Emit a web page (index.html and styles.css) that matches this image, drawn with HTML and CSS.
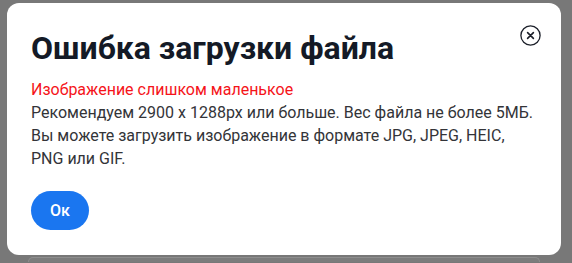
FILE: index.html
```html
<!DOCTYPE html>
<html lang="ru">
<head>
<meta charset="utf-8">
<link rel="stylesheet" href="styles.css">
</head>
<body>
<div class="overlay">
  <div class="modal">
    <div class="modal-head">
      <h1 class="title">Ошибка загрузки файла</h1>
      <button class="close" aria-label="Закрыть">
        <svg width="21" height="21" viewBox="0 0 21 21">
          <circle cx="10.5" cy="10.5" r="9.6" fill="none" stroke="#1b1f29" stroke-width="1.3"/>
          <path d="M7.6 7.6 L13.4 13.4 M13.4 7.6 L7.6 13.4" stroke="#1b1f29" stroke-width="1.6" stroke-linecap="round"/>
        </svg>
      </button>
    </div>
    <p class="error">Изображение слишком маленькое</p>
    <p class="text">Рекомендуем 2900 x 1288px или больше. Вес файла не более 5МБ.<br>Вы можете загрузить изображение в формате JPG, JPEG, HEIC,<br>PNG или GIF.</p>
    <button class="ok">Ок</button>
  </div>
  <div class="under"></div>
</div>
</body>
</html>
```
FILE: styles.css
```css
html, body {
  margin: 0;
  padding: 0;
  background: #787878;
  height: 100%;
  overflow: hidden;
}
.overlay {
  padding: 3px 0 0 7px;
}
.modal {
  box-sizing: border-box;
  width: 554px;
  height: 252px;
  background: #fff;
  border-radius: 12px;
  padding: 20px 20px 0 24px;
  font-family: Roboto, "Liberation Sans", sans-serif;
}
.modal-head {
  display: flex;
  justify-content: space-between;
  align-items: flex-start;
}
.title {
  margin: 6px 0 0;
  font-size: 32px;
  font-weight: 700;
  line-height: 38px;
  color: #141a26;
}
.close {
  margin: 2px 0 0;
  padding: 0;
  border: 0;
  background: none;
  width: 21px;
  height: 21px;
  display: flex;
}
.error {
  margin: 11px 0 0;
  color: #f5141a;
  font-size: 16px;
  line-height: 23px;
}
.text {
  margin: 0;
  color: #333438;
  font-size: 16px;
  line-height: 23px;
  white-space: nowrap;
}
.ok {
  margin-top: 21px;
  width: 58px;
  height: 39px;
  border: 0;
  border-radius: 20px;
  background: #1a76f0;
  color: #fff;
  font-family: Roboto, "Liberation Sans", sans-serif;
  font-size: 16px;
  font-weight: 500;
  padding: 0;
}
.under {
  margin: 2px 0 0 21px;
  width: 510px;
  height: 4px;
  border: 1px solid #8e8e8e;
  border-bottom: 0;
  border-radius: 8px 8px 0 0;
  background: #7c7c7c;
}
```
